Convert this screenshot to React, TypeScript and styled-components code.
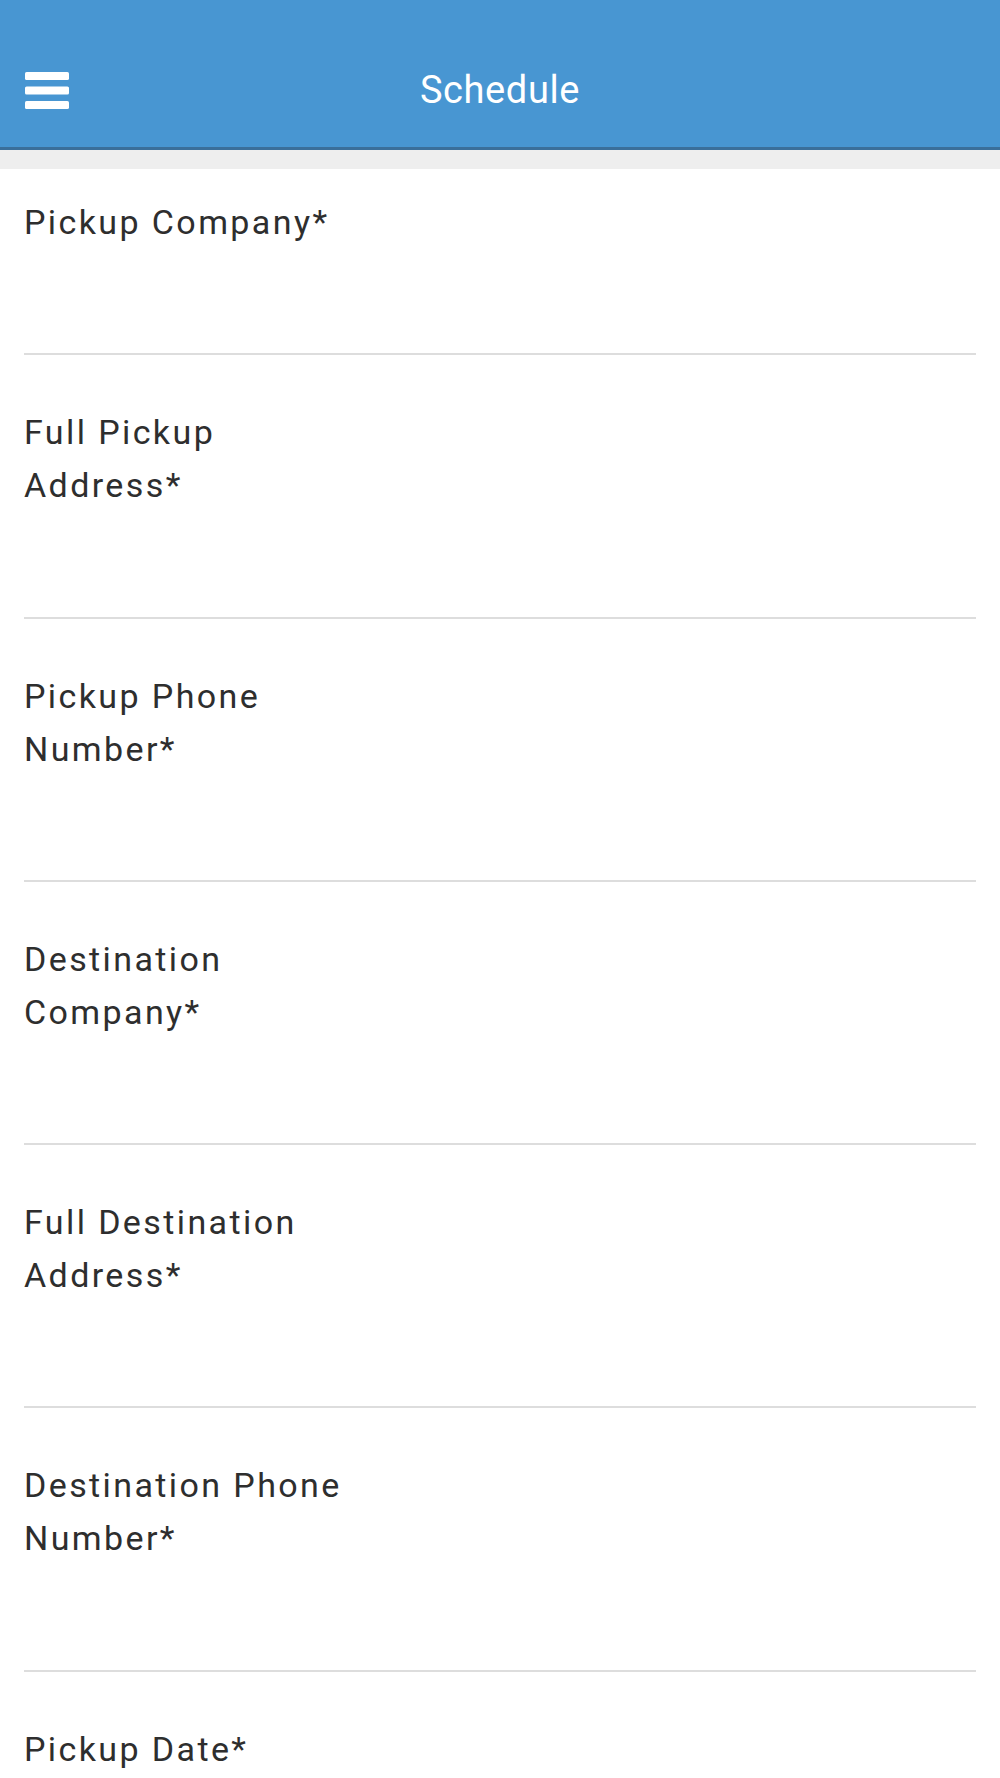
import React from 'react';
import styled, { createGlobalStyle } from 'styled-components';

const GlobalStyle = createGlobalStyle`
  html, body {
    margin: 0;
    padding: 0;
    background: #ffffff;
    font-family: Roboto, "Liberation Sans", Arial, sans-serif;
  }
  * {
    box-sizing: border-box;
  }
`;

const Page = styled.div`
  min-height: 100vh;
  background: #ffffff;
`;

const Header = styled.header`
  display: grid;
  grid-template-columns: 1fr auto 1fr;
  align-items: center;
  height: 150px;
  padding-top: 33px;
  background: #4896d2;
  border-bottom: 3px solid #3a6f9b;
`;

const MenuButton = styled.button`
  justify-self: start;
  display: flex;
  align-items: center;
  margin-left: 25px;
  padding: 0;
  border: none;
  background: transparent;
  cursor: pointer;
`;

const Title = styled.h1`
  margin: 0;
  font-size: 38px;
  font-weight: 400;
  letter-spacing: 0.6px;
  color: #ffffff;
`;

const Band = styled.div`
  height: 19px;
  background: #eeeeee;
`;

const Form = styled.form`
  display: flex;
  flex-direction: column;
`;

const Item = styled.div<{ $first?: boolean }>`
  margin: 0 24px;
  padding-top: ${({ $first }) => ($first ? '27px' : '51px')};
  border-bottom: 2px solid #dddddd;
`;

const Label = styled.label`
  display: block;
  max-width: 340px;
  font-size: 34px;
  line-height: 53px;
  letter-spacing: 2.4px;
  color: #2e2e2e;
`;

const Input = styled.input`
  display: block;
  width: 100%;
  height: 104.3px;
  padding: 0;
  border: none;
  outline: none;
  background: transparent;
  font: inherit;
  font-size: 34px;
  color: #333333;
`;

const MenuIcon = () => (
  <svg width="44" height="37" viewBox="0 0 44 37" fill="#ffffff">
    <rect x="0" y="0" width="44" height="8" rx="1.6" />
    <rect x="0" y="14.5" width="44" height="8" rx="1.6" />
    <rect x="0" y="29" width="44" height="8" rx="1.6" />
  </svg>
);

const fields = [
  'Pickup Company*',
  'Full Pickup Address*',
  'Pickup Phone Number*',
  'Destination Company*',
  'Full Destination Address*',
  'Destination Phone Number*',
  'Pickup Date*',
];

export default function App() {
  return (
    <Page>
      <GlobalStyle />
      <Header>
        <MenuButton aria-label="Menu">
          <MenuIcon />
        </MenuButton>
        <Title>Schedule</Title>
        <span />
      </Header>
      <Band />
      <Form>
        {fields.map((f, i) => (
          <Item key={f} $first={i === 0}>
            <Label htmlFor={`field-${i}`}>{f}</Label>
            <Input id={`field-${i}`} type="text" />
          </Item>
        ))}
      </Form>
    </Page>
  );
}
